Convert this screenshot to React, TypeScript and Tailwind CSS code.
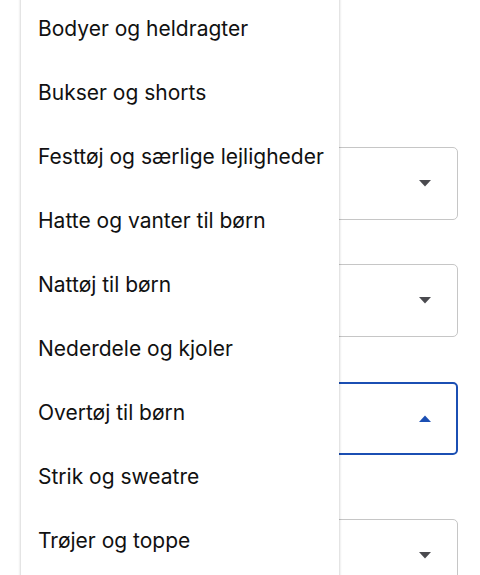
const items = [
  "Bodyer og heldragter",
  "Bukser og shorts",
  "Festtøj og særlige lejligheder",
  "Hatte og vanter til børn",
  "Nattøj til børn",
  "Nederdele og kjoler",
  "Overtøj til børn",
  "Strik og sweatre",
  "Trøjer og toppe",
];

function Caret({ up, blue }: { up?: boolean; blue?: boolean }) {
  return (
    <svg width="12" height="7" viewBox="0 0 12 7" className={up ? "rotate-180" : ""}>
      <path d="M0 0 L12 0 L6 6.5 Z" fill={blue ? "#1b4fb3" : "#4a4a4f"} />
    </svg>
  );
}

function SelectBox({ focused }: { focused?: boolean }) {
  return (
    <div
      className={
        focused
          ? "h-[73px] rounded-[5px] border-2 border-[#1b4fb3] flex items-center justify-end pr-[25px]"
          : "h-[73px] rounded-[5px] border border-[#c6c6c6] flex items-center justify-end pr-[26px]"
      }
    >
      <Caret up={focused} blue={focused} />
    </div>
  );
}

export default function App() {
  return (
    <div className="relative h-[575px] w-[480px] overflow-hidden bg-white font-['Inter',sans-serif]">
      <div className="flex flex-col px-[22px] pt-[147px]">
        <SelectBox />
        <div className="mt-[44px]">
          <SelectBox />
        </div>
        <div className="mt-[45px]">
          <SelectBox focused />
        </div>
        <div className="mt-[64px]">
          <SelectBox />
        </div>
      </div>

      <ul className="absolute left-[21px] top-[-3px] w-[318px] pb-[40px] bg-white shadow-[0_0_3px_rgba(0,0,0,0.28)]">
        {items.map((item) => (
          <li key={item} className="h-[64px] flex items-center pl-[17px] text-[21px] text-[#111]">
            {item}
          </li>
        ))}
      </ul>
    </div>
  );
}
